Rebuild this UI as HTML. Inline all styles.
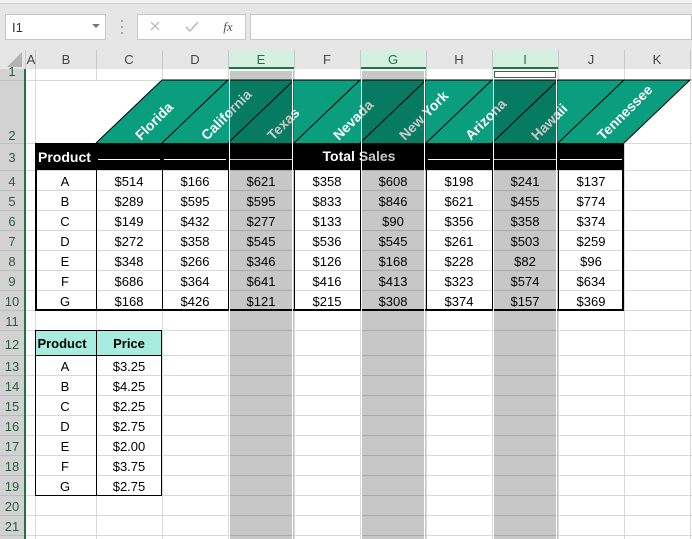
<!DOCTYPE html>
<html><head><meta charset="utf-8"><style>
html,body{margin:0;padding:0;width:692px;height:539px;overflow:hidden;background:#fff}
svg{display:block;font-family:"Liberation Sans",Arial,sans-serif}
</style></head><body>
<svg width="692" height="539" viewBox="0 0 692 539" xmlns="http://www.w3.org/2000/svg">
<rect x="0" y="0" width="692" height="50" fill="#e6e6e6"/>
<rect x="0" y="0" width="692" height="3" fill="#f3f3f3"/>
<line x1="0" y1="3.5" x2="692" y2="3.5" stroke="#d0d0d0"/>
<rect x="5.5" y="14.5" width="100" height="25" fill="#fff" stroke="#c6c6c6"/>
<text x="12" y="32" font-size="13" fill="#333">I1</text>
<path d="M92 24 L100 24 L96 28 Z" fill="#777"/>
<g fill="#aaa"><rect x="121" y="20" width="2" height="2"/><rect x="121" y="26" width="2" height="2"/><rect x="121" y="32" width="2" height="2"/></g>
<rect x="137.5" y="14.5" width="108" height="25" fill="#fff" stroke="#c6c6c6"/>
<path d="M151 22 L159 30 M159 22 L151 30" stroke="#bbb" stroke-width="1.3"/>
<path d="M186 27 L190 31 L198 22" stroke="#bbb" stroke-width="1.6" fill="none"/>
<text x="228" y="31" font-size="13" font-style="italic" font-family="Liberation Serif,serif" fill="#555" text-anchor="middle">fx</text>
<rect x="250.5" y="14.5" width="441" height="25" fill="#fff" stroke="#c6c6c6"/>
<rect x="0" y="50" width="692" height="19" fill="#e6e6e6"/>
<path d="M22 52 L22 67 L7 67 Z" fill="#b4b4b4"/>
<g fill="#d3f0e0"><rect x="228" y="50" width="66" height="19"/><rect x="360" y="50" width="66" height="19"/><rect x="492" y="50" width="66" height="19"/></g>
<g stroke="#217346" stroke-width="2"><line x1="228" y1="68" x2="294" y2="68"/><line x1="360" y1="68" x2="426" y2="68"/><line x1="492" y1="68" x2="558" y2="68"/></g>
<g stroke="#c8c8c8"><line x1="25.5" y1="50" x2="25.5" y2="69"/><line x1="35.5" y1="50" x2="35.5" y2="69"/><line x1="96.5" y1="50" x2="96.5" y2="69"/><line x1="162.5" y1="50" x2="162.5" y2="69"/><line x1="228.5" y1="50" x2="228.5" y2="69"/><line x1="294.5" y1="50" x2="294.5" y2="69"/><line x1="360.5" y1="50" x2="360.5" y2="69"/><line x1="426.5" y1="50" x2="426.5" y2="69"/><line x1="492.5" y1="50" x2="492.5" y2="69"/><line x1="558.5" y1="50" x2="558.5" y2="69"/><line x1="624.5" y1="50" x2="624.5" y2="69"/><line x1="690.5" y1="50" x2="690.5" y2="69"/></g>
<g font-size="13" fill="#444" text-anchor="middle">
<text x="31" y="64">A</text><text x="66" y="64">B</text><text x="129" y="64">C</text><text x="195" y="64">D</text><text x="261" y="64" fill="#217346">E</text><text x="327" y="64">F</text><text x="393" y="64" fill="#217346">G</text><text x="459" y="64">H</text><text x="525" y="64" fill="#217346">I</text><text x="591" y="64">J</text><text x="657" y="64">K</text>
</g>
<rect x="0" y="69" width="24" height="470" fill="#d2d2d2"/>
<rect x="24" y="69" width="2" height="470" fill="#217346"/>
<g stroke="#bdbdbd"><line x1="0" y1="80.5" x2="24" y2="80.5"/><line x1="0" y1="143.5" x2="24" y2="143.5"/><line x1="0" y1="170.5" x2="24" y2="170.5"/><line x1="0" y1="190.5" x2="24" y2="190.5"/><line x1="0" y1="210.5" x2="24" y2="210.5"/><line x1="0" y1="230.5" x2="24" y2="230.5"/><line x1="0" y1="250.5" x2="24" y2="250.5"/><line x1="0" y1="270.5" x2="24" y2="270.5"/><line x1="0" y1="290.5" x2="24" y2="290.5"/><line x1="0" y1="310.5" x2="24" y2="310.5"/><line x1="0" y1="330.5" x2="24" y2="330.5"/><line x1="0" y1="355.5" x2="24" y2="355.5"/><line x1="0" y1="375.5" x2="24" y2="375.5"/><line x1="0" y1="395.5" x2="24" y2="395.5"/><line x1="0" y1="415.5" x2="24" y2="415.5"/><line x1="0" y1="435.5" x2="24" y2="435.5"/><line x1="0" y1="455.5" x2="24" y2="455.5"/><line x1="0" y1="475.5" x2="24" y2="475.5"/><line x1="0" y1="495.5" x2="24" y2="495.5"/><line x1="0" y1="515.5" x2="24" y2="515.5"/><line x1="0" y1="535.5" x2="24" y2="535.5"/></g>
<g font-size="13" fill="#2a5d3e" text-anchor="middle">
<text x="12" y="76">1</text><text x="12" y="140">2</text><text x="12" y="162">3</text><text x="12" y="186">4</text><text x="12" y="206">5</text><text x="12" y="226">6</text><text x="12" y="246">7</text><text x="12" y="266">8</text><text x="12" y="286">9</text><text x="12" y="306">10</text><text x="12" y="326">11</text><text x="12" y="349">12</text><text x="12" y="371">13</text><text x="12" y="391">14</text><text x="12" y="411">15</text><text x="12" y="431">16</text><text x="12" y="451">17</text><text x="12" y="471">18</text><text x="12" y="491">19</text><text x="12" y="511">20</text><text x="12" y="531">21</text>
</g>
<g stroke="#d9d9d9">
<line x1="35.5" y1="69" x2="35.5" y2="539"/><line x1="96.5" y1="69" x2="96.5" y2="539"/><line x1="162.5" y1="69" x2="162.5" y2="539"/><line x1="228.5" y1="69" x2="228.5" y2="539"/><line x1="294.5" y1="69" x2="294.5" y2="539"/><line x1="360.5" y1="69" x2="360.5" y2="539"/><line x1="426.5" y1="69" x2="426.5" y2="539"/><line x1="492.5" y1="69" x2="492.5" y2="539"/><line x1="558.5" y1="69" x2="558.5" y2="539"/><line x1="624.5" y1="69" x2="624.5" y2="539"/><line x1="690.5" y1="69" x2="690.5" y2="539"/>
<line x1="26" y1="80.5" x2="692" y2="80.5"/><line x1="26" y1="143.5" x2="692" y2="143.5"/><line x1="26" y1="170.5" x2="692" y2="170.5"/><line x1="26" y1="190.5" x2="692" y2="190.5"/><line x1="26" y1="210.5" x2="692" y2="210.5"/><line x1="26" y1="230.5" x2="692" y2="230.5"/><line x1="26" y1="250.5" x2="692" y2="250.5"/><line x1="26" y1="270.5" x2="692" y2="270.5"/><line x1="26" y1="290.5" x2="692" y2="290.5"/><line x1="26" y1="310.5" x2="692" y2="310.5"/><line x1="26" y1="330.5" x2="692" y2="330.5"/><line x1="26" y1="355.5" x2="692" y2="355.5"/><line x1="26" y1="375.5" x2="692" y2="375.5"/><line x1="26" y1="395.5" x2="692" y2="395.5"/><line x1="26" y1="415.5" x2="692" y2="415.5"/><line x1="26" y1="435.5" x2="692" y2="435.5"/><line x1="26" y1="455.5" x2="692" y2="455.5"/><line x1="26" y1="475.5" x2="692" y2="475.5"/><line x1="26" y1="495.5" x2="692" y2="495.5"/><line x1="26" y1="515.5" x2="692" y2="515.5"/><line x1="26" y1="535.5" x2="692" y2="535.5"/>
</g>
<rect x="36" y="81" width="654" height="62" fill="#fff"/>
<path d="M96 143 L162 80 L690 80 L624 143 Z" fill="#0a9d7e"/>
<g stroke="#000" stroke-width="1"><path d="M96 143 L162 80 L690 80 L624 143 M162 143 L228 80 M228 143 L294 80 M294 143 L360 80 M360 143 L426 80 M426 143 L492 80 M492 143 L558 80 M558 143 L624 80" fill="none"/></g>
<g font-size="14" font-weight="bold" fill="#fff">
<text transform="translate(141,141) rotate(-45)">Florida</text>
<text transform="translate(207,141) rotate(-45)">California</text>
<text transform="translate(273,141) rotate(-45)">Texas</text>
<text transform="translate(339,141) rotate(-45)">Nevada</text>
<text transform="translate(405,141) rotate(-45)">New York</text>
<text transform="translate(471,141) rotate(-45)">Arizona</text>
<text transform="translate(537,141) rotate(-45)">Hawaii</text>
<text transform="translate(603,141) rotate(-45)">Tennessee</text>
</g>
<rect x="35" y="143" width="589" height="27" fill="#000"/>
<text x="38" y="162" font-size="14" font-weight="bold" fill="#fff">Product</text>
<text x="359" y="161" font-size="14" font-weight="bold" fill="#fff" text-anchor="middle">Total Sales</text>
<g stroke="#fff"><line x1="98" y1="159.5" x2="160" y2="159.5"/><line x1="164" y1="159.5" x2="226" y2="159.5"/><line x1="230" y1="159.5" x2="292" y2="159.5"/><line x1="428" y1="159.5" x2="490" y2="159.5"/><line x1="494" y1="159.5" x2="556" y2="159.5"/><line x1="560" y1="159.5" x2="622" y2="159.5"/></g>
<g stroke="#000"><line x1="96.5" y1="170" x2="96.5" y2="310"/><line x1="162.5" y1="170" x2="162.5" y2="310"/><line x1="228.5" y1="170" x2="228.5" y2="310"/><line x1="294.5" y1="170" x2="294.5" y2="310"/><line x1="360.5" y1="170" x2="360.5" y2="310"/><line x1="426.5" y1="170" x2="426.5" y2="310"/><line x1="492.5" y1="170" x2="492.5" y2="310"/><line x1="558.5" y1="170" x2="558.5" y2="310"/></g>
<path d="M36 170 L36 310 L623 310 L623 170" fill="none" stroke="#000" stroke-width="2"/>
<g font-size="13" fill="#000" text-anchor="middle">
<g transform="translate(0,186)"><text x="65">A</text><text x="129">$514</text><text x="195">$166</text><text x="261">$621</text><text x="327">$358</text><text x="393">$608</text><text x="459">$198</text><text x="525">$241</text><text x="591">$137</text></g>
<g transform="translate(0,206)"><text x="65">B</text><text x="129">$289</text><text x="195">$595</text><text x="261">$595</text><text x="327">$833</text><text x="393">$846</text><text x="459">$621</text><text x="525">$455</text><text x="591">$774</text></g>
<g transform="translate(0,226)"><text x="65">C</text><text x="129">$149</text><text x="195">$432</text><text x="261">$277</text><text x="327">$133</text><text x="393">$90</text><text x="459">$356</text><text x="525">$358</text><text x="591">$374</text></g>
<g transform="translate(0,246)"><text x="65">D</text><text x="129">$272</text><text x="195">$358</text><text x="261">$545</text><text x="327">$536</text><text x="393">$545</text><text x="459">$261</text><text x="525">$503</text><text x="591">$259</text></g>
<g transform="translate(0,266)"><text x="65">E</text><text x="129">$348</text><text x="195">$266</text><text x="261">$346</text><text x="327">$126</text><text x="393">$168</text><text x="459">$228</text><text x="525">$82</text><text x="591">$96</text></g>
<g transform="translate(0,286)"><text x="65">F</text><text x="129">$686</text><text x="195">$364</text><text x="261">$641</text><text x="327">$416</text><text x="393">$413</text><text x="459">$323</text><text x="525">$574</text><text x="591">$634</text></g>
<g transform="translate(0,306)"><text x="65">G</text><text x="129">$168</text><text x="195">$426</text><text x="261">$121</text><text x="327">$215</text><text x="393">$308</text><text x="459">$374</text><text x="525">$157</text><text x="591">$369</text></g>
</g>
<rect x="35.5" y="330.5" width="126" height="25" fill="#a8ece0" stroke="#000"/>
<rect x="35.5" y="355.5" width="126" height="140" fill="none" stroke="#000"/>
<line x1="96.5" y1="330" x2="96.5" y2="495" stroke="#000"/>
<g font-size="13" fill="#000" text-anchor="middle">
<text x="62" y="348" font-weight="bold">Product</text><text x="129" y="348" font-weight="bold">Price</text>
<text x="65" y="371">A</text><text x="129" y="371">$3.25</text>
<text x="65" y="391">B</text><text x="129" y="391">$4.25</text>
<text x="65" y="411">C</text><text x="129" y="411">$2.25</text>
<text x="65" y="431">D</text><text x="129" y="431">$2.75</text>
<text x="65" y="451">E</text><text x="129" y="451">$2.00</text>
<text x="65" y="471">F</text><text x="129" y="471">$3.75</text>
<text x="65" y="491">G</text><text x="129" y="491">$2.75</text>
</g>
<g fill="rgba(0,0,0,0.22)"><rect x="229" y="70" width="65" height="469"/><rect x="361" y="70" width="65" height="469"/><rect x="493" y="80" width="65" height="459"/></g>
<g stroke="#fff" fill="none"><rect x="229.5" y="70.5" width="63" height="470"/><rect x="361.5" y="70.5" width="63" height="470"/><rect x="493.5" y="70.5" width="63" height="470"/></g>
<rect x="494.5" y="71.5" width="61" height="6" fill="#fff" stroke="#217346"/>
</svg>
</body></html>
